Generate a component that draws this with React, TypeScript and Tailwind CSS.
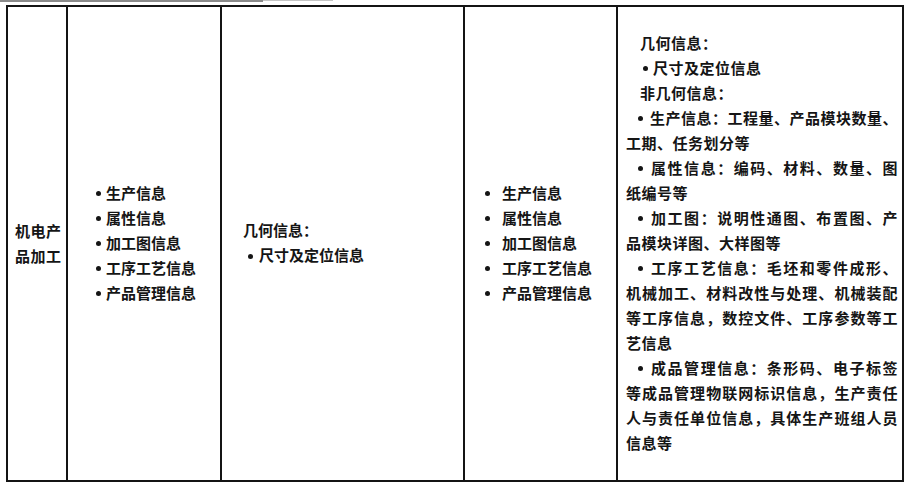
import React from 'react';

const FONT = "font-['Liberation_Sans','Noto_Sans_CJK_SC',sans-serif]";

// 一行两端对齐（印刷排版里的满行）
const Full: React.FC<{ children: React.ReactNode; indent?: boolean }> = ({ children, indent }) => (
    <div className={`text-justify [text-align-last:justify] ${indent ? 'pl-[12px]' : ''}`}>{children}</div>
);

const Tail: React.FC<{ children: React.ReactNode }> = ({ children }) => <div>{children}</div>;

// 印刷体的圆点，比字体里的 • 更粗
const Dot: React.FC<{ gap: string }> = ({ gap }) => (
    <span className={`inline-flex items-center align-middle h-[25px] -mt-[3px] ${gap}`}>
        <span className="w-[5px] h-[5px] rounded-full bg-[#151515]" />
    </span>
);

const leftItems = ['生产信息', '属性信息', '加工图信息', '工序工艺信息', '产品管理信息'];

export default function App() {
    return (
        <div className={`w-[914px] h-[491px] bg-white text-[#151515] ${FONT}`}>
            {/* 上一页残留的横线 */}
            <div className="flex items-start h-[5px]">
                <div className="h-[2px] w-[263px] bg-[#8a8a8a]" />
                <div className="h-[1px] w-[70px] bg-[#c4c4c4]" />
            </div>

            <div className="ml-[6px] w-[898px] h-[477px] border-2 border-[#141414] grid grid-cols-[60px_154px_243px_153px_284px] text-[15px] leading-[25px] font-semibold">
                {/* 应用阶段 */}
                <div className="border-r-2 border-[#141414] flex items-center pl-[7px]">
                    <div className="w-[48px] tracking-[0.5px]">机电产品加工</div>
                </div>

                {/* 几何/非几何信息 */}
                <div className="border-r-2 border-[#141414] flex items-center pl-[28px]">
                    <div>
                        {leftItems.map(t => (
                            <div key={t}><Dot gap="w-[10px]" />{t}</div>
                        ))}
                    </div>
                </div>

                <div className="border-r-2 border-[#141414] flex items-center pl-[21px]">
                    <div>
                        <div>几何信息：</div>
                        <div className="pl-[5px]"><Dot gap="w-[11px]" />尺寸及定位信息</div>
                    </div>
                </div>

                <div className="border-r-2 border-[#141414] flex items-center pl-[20px]">
                    <div>
                        {leftItems.map(t => (
                            <div key={t}><Dot gap="w-[17px]" />{t}</div>
                        ))}
                    </div>
                </div>

                {/* 详细说明 */}
                <div className="flex items-center pl-[8px] pr-[4px]">
                    <div className="w-full tracking-[0.5px]">
                        <div className="pl-[14px]">几何信息：</div>
                        <div className="pl-[17px]"><Dot gap="w-[10px]" />尺寸及定位信息</div>
                        <div className="pl-[14px]">非几何信息：</div>
                        <Full indent><Dot gap="w-[12px]" />生产信息：工程量、产品模块数量、</Full>
                        <Tail>工期、任务划分等</Tail>
                        <Full indent><Dot gap="w-[12px]" />属性信息：编码、材料、数量、图</Full>
                        <Tail>纸编号等</Tail>
                        <Full indent><Dot gap="w-[12px]" />加工图：说明性通图、布置图、产</Full>
                        <Tail>品模块详图、大样图等</Tail>
                        <Full indent><Dot gap="w-[12px]" />工序工艺信息：毛坯和零件成形、</Full>
                        <Full>机械加工、材料改性与处理、机械装配</Full>
                        <Full>等工序信息，数控文件、工序参数等工</Full>
                        <Tail>艺信息</Tail>
                        <Full indent><Dot gap="w-[12px]" />成品管理信息：条形码、电子标签</Full>
                        <Full>等成品管理物联网标识信息，生产责任</Full>
                        <Full>人与责任单位信息，具体生产班组人员</Full>
                        <Tail>信息等</Tail>
                    </div>
                </div>
            </div>
        </div>
    );
}
